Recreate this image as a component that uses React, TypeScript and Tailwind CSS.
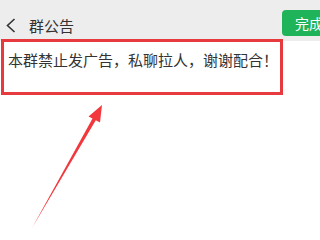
const App = () => {
  return (
    <div
      className="relative w-[320px] h-[240px] overflow-hidden bg-white text-[#333]"
      style={{ fontFamily: '"Noto Sans CJK SC", "Noto Sans", sans-serif' }}
    >
      {/* top bar */}
      <div className="flex items-center h-[41px] bg-[#ededed]">
        <svg width="20" height="41" viewBox="0 0 20 41" className="ml-[2px] mt-[2px]">
          <path d="M12.5 18 L5.5 24.5 L12.5 31" fill="none" stroke="#333" strokeWidth="1.6" />
        </svg>
        <span className="ml-[7px] mt-[9px] text-[15px] leading-none">群公告</span>
        <button className="ml-auto mt-[5px] h-[26px] w-[38px] rounded-l-[4px] bg-[#1fb45a] pl-[13px] text-left text-[14px] text-white leading-none whitespace-nowrap">
          完成
        </button>
      </div>

      {/* notice text */}
      <div className="px-[8px] pt-[11px] text-[15px] leading-[16px] whitespace-nowrap">
        本群禁止发广告，私聊拉人，谢谢配合！
      </div>

      {/* annotation box */}
      <div className="absolute left-[1px] top-[39px] w-[282px] h-[56px] border-[3px] border-[#e63a3e]" />

      {/* annotation arrow */}
      <svg className="absolute left-0 top-0" width="320" height="240" viewBox="0 0 320 240">
        <polygon
          points="32,228 92.5,118.5 88.5,116.5 102,105 100,122.5 95.8,120.3"
          fill="#f2383c"
        />
      </svg>
    </div>
  );
};

export default App;
